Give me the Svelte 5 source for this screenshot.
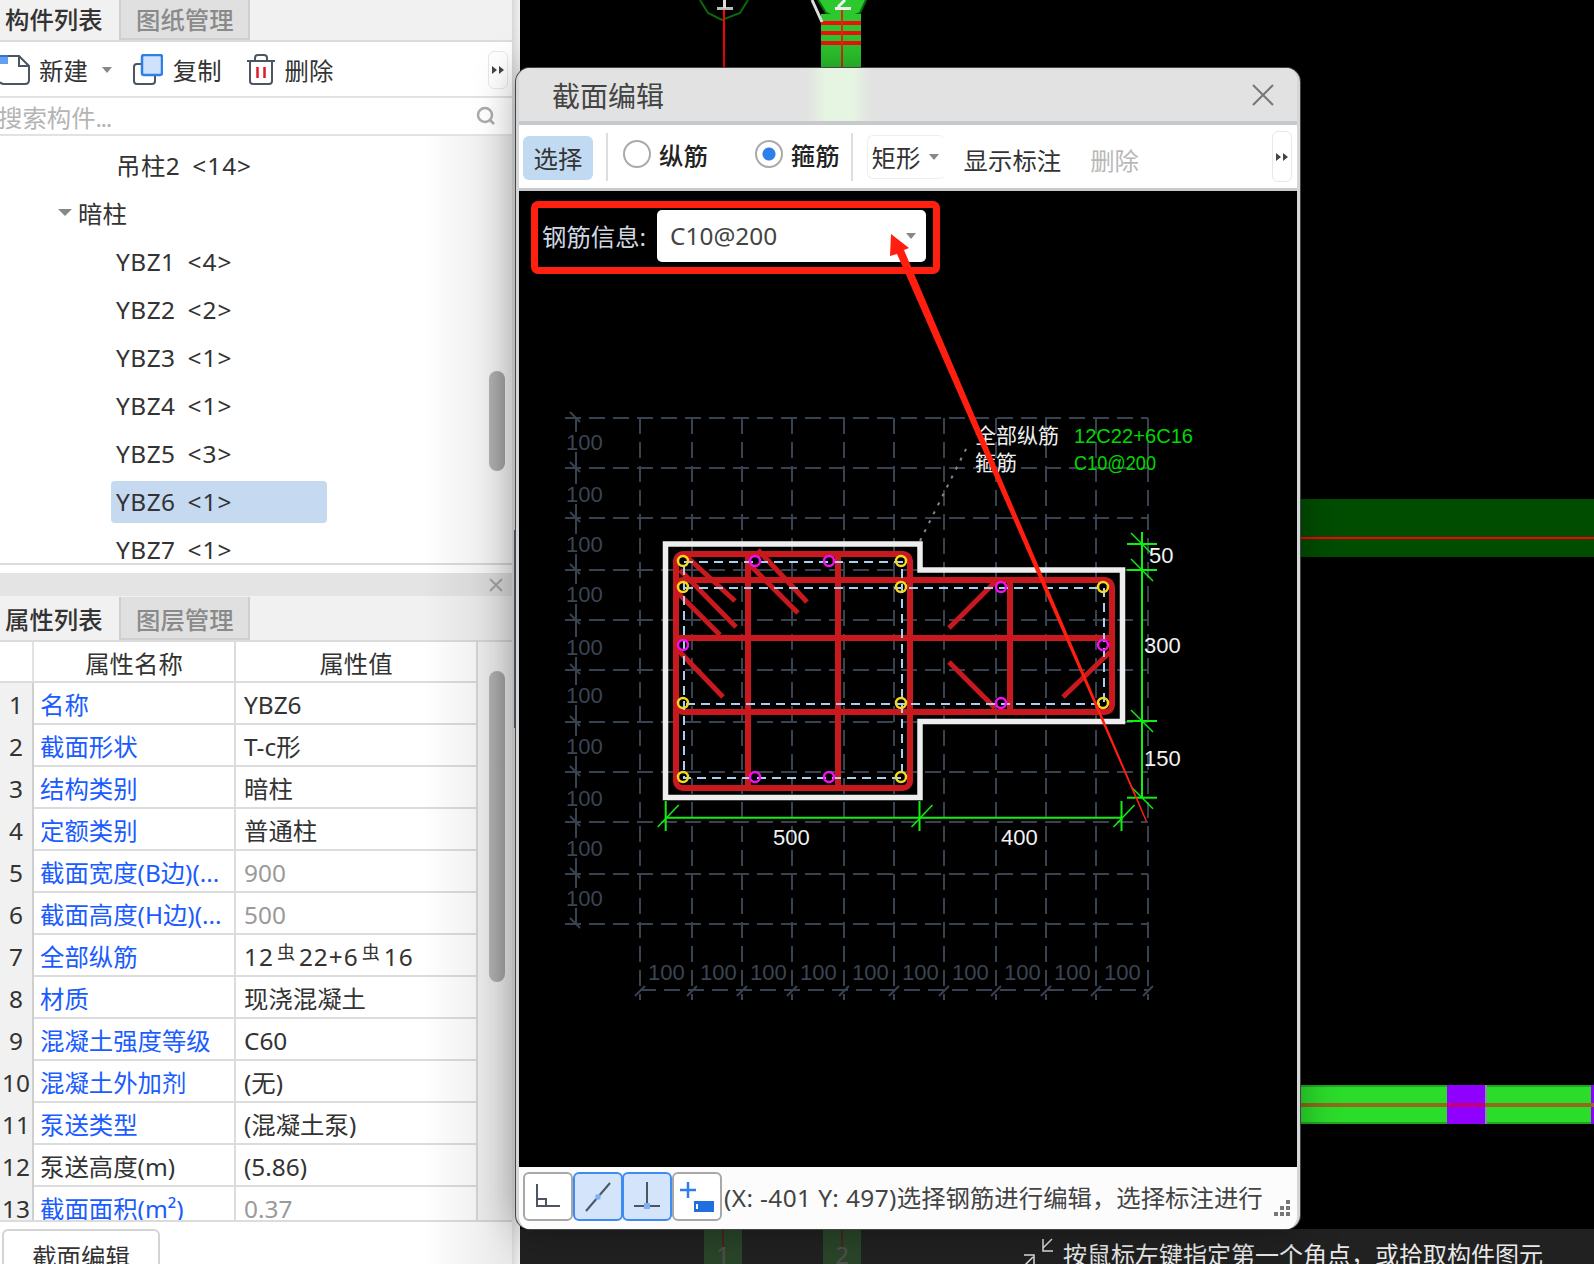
<script>
  const treeRows = [
    { name: "YBZ1", count: 4 },
    { name: "YBZ2", count: 2 },
    { name: "YBZ3", count: 1 },
    { name: "YBZ4", count: 1 },
    { name: "YBZ5", count: 3 },
    { name: "YBZ6", count: 1, selected: true },
    { name: "YBZ7", count: 1 },
  ];

  const props = [
    { name: "名称", value: "YBZ6", link: true },
    { name: "截面形状", value: "T-c形", link: true },
    { name: "结构类别", value: "暗柱", link: true },
    { name: "定额类别", value: "普通柱", link: true },
    { name: "截面宽度(B边)(...", value: "900", link: true, muted: true },
    { name: "截面高度(H边)(...", value: "500", link: true, muted: true },
    { name: "全部纵筋", rebar: true, link: true },
    { name: "材质", value: "现浇混凝土", link: true },
    { name: "混凝土强度等级", value: "C60", link: true },
    { name: "混凝土外加剂", value: "(无)", link: true },
    { name: "泵送类型", value: "(混凝土泵)", link: true },
    { name: "泵送高度(m)", value: "(5.86)" },
    { name: "截面面积(m²)", value: "0.37", link: true, muted: true },
  ];

  // drawing coordinates are page pixels, the svg viewBox lines them up
  const gridX = [640, 692, 742, 792, 844, 894, 944, 996, 1046, 1096, 1148];
  const gridY = [418, 468, 518, 570, 620, 670, 722, 772, 822, 874, 924];
  const sideLabels = [442, 494, 544, 594, 647, 695, 746, 798, 848, 898];
  const hooks = [
    [685, 555, 735, 601], [680, 570, 736, 627], [678, 593, 720, 635], [676, 648, 723, 697],
    [750, 565, 798, 613], [758, 550, 807, 602], [997, 580, 949, 628], [949, 662, 995, 708],
    [1110, 652, 1063, 697],
  ];
  const yellow = [[683, 561], [901, 561], [683, 587], [901, 587], [683, 703], [901, 703], [683, 777], [901, 777], [1103, 587], [1103, 703]];
  const magenta = [[755, 561], [829, 561], [683, 645], [755, 777], [829, 777], [1001, 587], [1001, 703], [1103, 645]];
  const dimTicks = [665.7, 919.5, 1121.5];
  const sideTicks = [544, 570, 721, 797.7];
</script>

<div class="app">
  <aside class="left">
    <div class="tabs">
      <div class="tab active">构件列表</div>
      <div class="tab">图纸管理</div>
    </div>
    <div class="tools">
      <svg class="ico-new" width="30" height="32" viewBox="0 0 30 32">
        <path d="M0 2H19L29 12V26Q29 30 25 30H4Q1 30 0 28" fill="#fff" stroke="#4b5563" stroke-width="2" />
        <path d="M19 2V12H29" fill="none" stroke="#4b5563" stroke-width="2" />
        <rect x="0" y="1" width="8" height="9" fill="#2f7fe8" opacity=".75" />
      </svg>
      <span>新建</span>
      <i class="tri"></i>
      <svg class="ico-copy" width="30" height="32" viewBox="0 0 30 32">
        <rect x="1" y="10" width="21" height="20" rx="3" fill="#fff" stroke="#4b5563" stroke-width="2" />
        <rect x="9" y="1" width="20" height="20" rx="2" fill="#cfe2fb" stroke="#2f7fe8" stroke-width="2.5" />
      </svg>
      <span class="lbl">复制</span>
      <svg class="ico-del" width="28" height="32" viewBox="0 0 28 32">
        <path d="M0 7H28M8 7V4Q8 1 11 1H17Q20 1 20 4V7" fill="none" stroke="#4b5563" stroke-width="2" />
        <path d="M3 7V27Q3 30 6 30H22Q25 30 25 27V7" fill="none" stroke="#4b5563" stroke-width="2" />
        <path d="M10.500 13V24M17.500 13V24" stroke="#e01b24" stroke-width="2.500" />
      </svg>
      <span class="lbl">删除</span>
      <div class="handle">
        <svg width="12" height="10" viewBox="0 0 12 10"><path d="M0 1L5 5L0 9ZM7 1L12 5L7 9Z" fill="#444" /></svg>
      </div>
    </div>
    <div class="search">
      <span>搜索构件<span class="dots">...</span></span>
      <svg width="20" height="20" viewBox="0 0 20 20">
        <circle cx="9" cy="9" r="7" fill="none" stroke="#aaa" stroke-width="2.500" />
        <path d="M14 14L18 18" stroke="#aaa" stroke-width="2.500" />
      </svg>
    </div>
    <div class="tree">
      <div class="row leaf"><span class="item">吊柱2<b>&lt;14&gt;</b></span></div>
      <div class="row group"><i class="tri"></i>暗柱</div>
      {#each treeRows as r}
        <div class="row leaf">
          <span class="item" class:selected={r.selected}>{r.name}<b>&lt;{r.count}&gt;</b></span>
        </div>
      {/each}
      <div class="thumb tree-thumb"></div>
    </div>
    <div class="gap"></div>
    <div class="closebar">
      <svg width="14" height="14" viewBox="0 0 14 14"><path d="M1 1L13 13M13 1L1 13" stroke="#aaa" stroke-width="2" /></svg>
    </div>
    <div class="tabs second">
      <div class="tab active">属性列表</div>
      <div class="tab">图层管理</div>
    </div>
    <div class="props">
      <div class="table">
        <div class="tr head">
          <div class="idx"></div>
          <div class="cell">属性名称</div>
          <div class="cell">属性值</div>
        </div>
        {#each props as p, i}
          <div class="tr">
            <div class="idx">{i + 1}</div>
            <div class="cell name" class:link={p.link}>{p.name}</div>
            <div class="cell val" class:muted={p.muted} class:spaced={p.rebar}>
              {#if p.rebar}
                12<span class="bar-sign">虫</span>22+6<span class="bar-sign">虫</span>16
              {:else}
                {p.value}
              {/if}
            </div>
          </div>
        {/each}
      </div>
      <div class="gutter"><div class="thumb props-thumb"></div></div>
    </div>
    <div class="bottom-tabs">
      <div class="bottom-tab">截面编辑</div>
    </div>
  </aside>

  <div class="splitter"><div class="splitter-dark"></div></div>

  <main class="canvas">
    <svg class="scene" width="1074" height="1264" viewBox="520 0 1074 1264">
      <!-- axis 1 -->
      <path d="M700 0L708 13L722 20L740 13L748 0" fill="none" stroke="#0a6a0a" stroke-width="2" />
      <rect x="717" y="7" width="16" height="3" fill="#bbb" />
      <rect x="723" y="0" width="3" height="8" fill="#ddd" />
      <rect x="723" y="10" width="2" height="58" fill="#f00" />
      <!-- axis 2 -->
      <path d="M818 0L826 13L842 20L860 13L866 0" fill="#2dc82d" stroke="#0a6a0a" stroke-width="2" />
      <rect x="821" y="14" width="40" height="54" fill="#2dc82d" />
      <rect x="821" y="21" width="40" height="4" fill="#f01010" />
      <rect x="821" y="31" width="40" height="4" fill="#f01010" />
      <rect x="821" y="41" width="40" height="4" fill="#f01010" />
      <rect x="841" y="8" width="2" height="60" fill="#d03010" />
      <path d="M812 0L822 22" stroke="#ddd" stroke-width="3" />
      <rect x="835" y="7" width="16" height="3" fill="#eee" />
      <path d="M838 7L845 0" stroke="#eee" stroke-width="3" />
      <!-- beams on the right -->
      <rect x="1300" y="499" width="294" height="58" fill="#004d00" />
      <rect x="1300" y="537" width="294" height="2" fill="#f00" />
      <rect x="1300" y="1085" width="294" height="39" fill="#2bdc2b" />
      <rect x="1300" y="1085" width="294" height="2" fill="#22a522" />
      <rect x="1300" y="1122" width="294" height="2" fill="#22a522" />
      <rect x="1447" y="1085" width="38" height="39" fill="#8f00ff" />
      <rect x="1485" y="1085" width="2" height="39" fill="#7a9a9a" />
      <rect x="1591" y="1085" width="3" height="39" fill="#8f00ff" />
      <rect x="1300" y="1103" width="294" height="4" fill="#8f6b1c" />
      <rect x="1447" y="1103" width="38" height="4" fill="#c0007f" />
      <!-- axes running under the hint strip -->
      <path d="M704 1229H742V1264H704ZM823 1229H861V1264H823Z" fill="#2dc82d" />
      <path d="M723 1229V1250M842 1229V1250" stroke="#f00" stroke-width="2" />
      <text x="723" y="1264" class="axis-no">1</text>
      <text x="842" y="1264" class="axis-no">2</text>
    </svg>

    <div class="hint">
      <svg width="32" height="30" viewBox="0 0 32 30">
        <path d="M30 1L21 10M21 1V13H31M1 29L11 19M12 30V17H2" fill="none" stroke="#ddd" stroke-width="1.500" />
      </svg>
      <span>按鼠标左键指定第一个角点，或拾取构件图元</span>
    </div>

    <section class="modal">
      <header class="title">
        <div class="glow"></div>
        <span>截面编辑</span>
        <svg width="24" height="24" viewBox="0 0 24 24"><path d="M2 2L22 22M22 2L2 22" stroke="#777" stroke-width="2" /></svg>
      </header>

      <div class="mtools">
        <div class="pick">选择</div>
        <div class="sep first"></div>
        <label class="radio one"><i></i>纵筋</label>
        <label class="radio on two"><i></i>箍筋</label>
        <div class="sep"></div>
        <div class="shape">矩形<i class="tri"></i></div>
        <div class="tlink">显示标注</div>
        <div class="tlink off">删除</div>
        <div class="handle small">
          <svg width="12" height="10" viewBox="0 0 12 10"><path d="M0 1L5 5L0 9ZM7 1L12 5L7 9Z" fill="#444" /></svg>
        </div>
      </div>

      <div class="mbody">
        <svg class="drawing" width="778" height="976" viewBox="519 191 778 976">
          <g class="grid">
            {#each gridX as x}
              <line x1={x} y1="418" x2={x} y2="1000" />
            {/each}
            {#each gridY as y}
              <line x1="565" y1={y} x2="1148" y2={y} />
            {/each}
            <line x1="640" y1="990" x2="1148" y2="990" />
          </g>
          {#each sideLabels as y, i}
            <line x1="576" y1={gridY[i]} x2="576" y2={y - 10} class="solid" />
            <line x1="576" y1={y + 10} x2="576" y2={gridY[i + 1]} class="solid" />
          {/each}
          {#each gridY as y}
            <line x1="570" y1={y - 6} x2="580" y2={y + 4} class="solid" />
          {/each}
          {#each gridX as x}
            <line x1={x - 5} y1="996" x2={x + 5} y2="986" class="solid" />
          {/each}
          {#each sideLabels as y}
            <text x="566" y={y + 8} class="gridtxt">100</text>
          {/each}
          {#each gridX.slice(0, 10) as x}
            <text x={x + 8} y="980" class="gridtxt">100</text>
          {/each}

          <path d="M920 541L969 443" stroke="#888" stroke-width="2" stroke-dasharray="3 7" fill="none" />
          <text x="975" y="443" class="note">全部纵筋</text>
          <text x="975" y="470" class="note">箍筋</text>
          <text x="1074" y="443" class="note green" textLength="119" lengthAdjust="spacingAndGlyphs">12C22+6C16</text>
          <text x="1074" y="470" class="note green" textLength="82" lengthAdjust="spacingAndGlyphs">C10@200</text>

          <!-- section outline -->
          <path d="M665.500 544H920V570H1122.500V721.500H920V797.500H665.500Z" fill="none" stroke="#eee" stroke-width="5.500" />

          <!-- stirrups -->
          <g class="rebar">
            <rect x="676" y="554" width="234" height="234" rx="7" />
            <rect x="676" y="580" width="436" height="132" rx="7" />
            <path d="M676 638H1112M748 554V788M838 556V786M1010 580V712" />
          </g>
          {#each hooks as h}
            <line x1={h[0]} y1={h[1]} x2={h[2]} y2={h[3]} class="hook" />
          {/each}

          <g class="ties">
            <path d="M684 562H902V778H684ZM684 588H1104V704H684" />
          </g>
          {#each yellow as c}
            <circle cx={c[0]} cy={c[1]} r="5" class="ring yellow" />
          {/each}
          {#each magenta as c}
            <circle cx={c[0]} cy={c[1]} r="5" class="ring magenta" />
          {/each}

          <!-- dimensions -->
          <g class="dim">
            <line x1="665.700" y1="817.700" x2="1121.500" y2="817.700" />
            {#each dimTicks as x}
              <line x1={x} y1="801" x2={x} y2="831" />
              <line x1={x + 13} y1="805" x2={x - 8} y2="827" class="thin" />
            {/each}
            <line x1="1142" y1="532" x2="1142" y2="797.700" />
            {#each sideTicks as y}
              <line x1="1127" y1={y} x2="1157" y2={y} />
              <line x1="1131" y1={y - 11} x2="1153" y2={y + 11} class="thin" />
            {/each}
          </g>
          <text x="773" y="845" class="dimtxt">500</text>
          <text x="1001" y="845" class="dimtxt">400</text>
          <text x="1149" y="563" class="dimtxt">50</text>
          <text x="1144" y="653" class="dimtxt">300</text>
          <text x="1144" y="766" class="dimtxt">150</text>
        </svg>

        <div class="info">
          <span class="info-label">钢筋信息:</span>
          <div class="combo">C10@200<i class="tri"></i></div>
        </div>

        <!-- red arrow painted over the screenshot -->
        <svg class="annot" width="778" height="976" viewBox="519 191 778 976">
          <path d="M891 234L909 248L904 250L1147 821L1145.500 821L897 254L890 256Z" fill="#ff1e0f" />
        </svg>
      </div>

      <footer class="status">
        <div class="sbtn">
          <svg width="30" height="30" viewBox="0 0 30 30"><path d="M4 2V24H27M4 17H13V24" fill="none" stroke="#4b5563" stroke-width="2" /></svg>
        </div>
        <div class="sbtn on">
          <svg width="30" height="32" viewBox="0 0 30 32"><path d="M3 30L27 2" stroke="#4b5563" stroke-width="2" /><rect x="12.500" y="13.500" width="5" height="5" fill="#7fb0f0" /></svg>
        </div>
        <div class="sbtn on">
          <svg width="30" height="32" viewBox="0 0 30 32"><path d="M15 1V25M2 25H28" stroke="#4b5563" stroke-width="2" /><rect x="12" y="22" width="6" height="6" fill="#7fb0f0" /></svg>
        </div>
        <div class="sbtn">
          <svg width="34" height="32" viewBox="0 0 34 32"><path d="M8 1V17M0 9H16" stroke="#2f7fe8" stroke-width="2.500" /><rect x="14" y="20" width="20" height="11" fill="#1f6fe0" /><rect x="16" y="23" width="2" height="5" fill="#fff" /></svg>
        </div>
        <div class="stext"><span class="coords">(X: -401 Y: 497)</span>选择钢筋进行编辑，选择标注进行</div>
        <svg class="grip" width="18" height="18" viewBox="0 0 18 18">
          <path d="M13 1h4v4h-4zM7 7h4v4H7zM13 7h4v4h-4zM1 13h4v4H1zM7 13h4v4H7zM13 13h4v4h-4z" fill="#777" />
        </svg>
      </footer>
    </section>
  </main>
</div>

<style>
  :global(body) {
    background: #000;
  }

  .app {
    display: flex;
    width: 1594px;
    height: 1264px;
    overflow: hidden;
    font-family: "Noto Sans", "Noto Sans CJK SC", sans-serif;
    font-size: 24.4px;
    color: #333;
  }

  .left {
    position: relative;
    flex: 0 0 512px;
    display: flex;
    flex-direction: column;
    background: #fff;
  }

  .left::after {
    content: "";
    position: absolute;
    top: 136px;
    right: 0;
    bottom: 0;
    width: 90px;
    background: linear-gradient(to right, rgba(0, 0, 0, 0), rgba(0, 0, 0, 0.09));
    pointer-events: none;
  }

  .splitter {
    position: relative;
    flex: 0 0 8px;
    background: linear-gradient(to right, #d8d8d8, #f0f0f0);
  }

  .splitter-dark {
    position: absolute;
    left: 2px;
    top: 530px;
    width: 4px;
    height: 198px;
    background: #596270;
  }

  .tabs {
    display: flex;
    height: 42px;
    background: #f1f1f1;
    border-bottom: 2px solid #dcdcdc;
    box-sizing: border-box;
  }

  .tabs.second {
    height: 46px;
    padding-top: 1px;
  }

  .tabs.second .tab {
    line-height: 45px;
  }

  .tab {
    width: 131px;
    padding-left: 15px;
    box-sizing: border-box;
    line-height: 40px;
    background: #e0e0e0;
    color: #8a8a8a;
    font-weight: 500;
    border-left: 2px solid #cfcfcf;
    border-right: 2px solid #cfcfcf;
    border-bottom: 2px solid #cfcfcf;
  }

  .tab.active {
    width: 119px;
    padding-left: 5px;
    background: #f1f1f1;
    color: #333;
    border: 0;
  }

  .tools {
    display: flex;
    align-items: center;
    height: 56px;
    padding-top: 1px;
    box-sizing: border-box;
    border-bottom: 2px solid #e2e2e2;
  }

  .ico-new {
    margin-right: 9px;
  }

  .tri {
    display: inline-block;
    width: 0;
    height: 0;
    border-left: 5px solid transparent;
    border-right: 5px solid transparent;
    border-top: 6px solid #888;
  }

  .tools .tri {
    margin-left: 14px;
  }

  .ico-copy {
    margin-left: 21px;
  }

  .ico-del {
    margin-left: 25px;
  }

  .lbl {
    margin-left: 10px;
  }

  .handle {
    display: flex;
    align-items: center;
    justify-content: center;
    width: 20px;
    height: 38px;
    margin-left: auto;
    margin-right: 4px;
    border: 1px solid #e8e8e8;
    border-radius: 6px;
    box-sizing: border-box;
  }

  .handle.small {
    height: 51px;
    margin-right: 5px;
  }

  .search {
    display: flex;
    align-items: center;
    justify-content: space-between;
    height: 38px;
    padding-right: 16px;
    box-sizing: border-box;
    border-bottom: 2px solid #e2e2e2;
    color: #b4b4b4;
  }

  .search > span {
    margin-left: -2px;
  }

  .dots {
    letter-spacing: -1.5px;
  }

  .tree {
    position: relative;
    height: 429px;
    padding-top: 6px;
    box-sizing: border-box;
    border-bottom: 2px solid #dcdcdc;
    overflow: hidden;
  }

  .row {
    display: flex;
    align-items: center;
    height: 48px;
  }

  .row.leaf {
    padding-left: 111px;
  }

  .row.group {
    padding-left: 58px;
    padding-bottom: 4px;
    box-sizing: border-box;
  }

  .row.group .tri {
    margin-right: 6px;
    border-left-width: 7px;
    border-right-width: 7px;
    border-top-width: 7px;
  }

  .item {
    height: 42px;
    width: 216px;
    padding-left: 5px;
    box-sizing: border-box;
    line-height: 41px;
    border-radius: 4px;
    white-space: nowrap;
    letter-spacing: 0.5px;
  }

  .item.selected {
    background: #c5d9f1;
  }

  .item b {
    margin-left: 12px;
    font-weight: 400;
    letter-spacing: 1px;
  }

  .thumb {
    position: absolute;
    width: 16px;
    border-radius: 8px;
    background: linear-gradient(to right, #bdbdbd, #ababab);
  }

  .tree-thumb {
    left: 489px;
    top: 235px;
    height: 100px;
  }

  .gap {
    height: 8px;
  }

  .closebar {
    display: flex;
    align-items: center;
    justify-content: flex-end;
    height: 23px;
    padding-right: 9px;
    background: #e4e4e4;
  }

  .props {
    position: relative;
    display: flex;
    height: 580px;
    overflow: hidden;
    border-bottom: 2px solid #dcdcdc;
    box-sizing: border-box;
  }

  .table {
    flex: 0 0 478px;
  }

  .tr {
    display: grid;
    grid-template-columns: 34px 202px 242px;
    height: 42px;
    box-sizing: border-box;
    border-bottom: 2px solid #dcdcdc;
    line-height: 44px;
  }

  .tr.head {
    height: 41px;
    text-align: center;
  }

  .idx {
    background: #f1f1f1;
    border-right: 2px solid #cfcfcf;
    box-sizing: border-box;
    text-align: center;
    white-space: nowrap;
  }

  .tr.head .idx {
    background: #fff;
    border-right-color: #e2e2e2;
  }

  .cell {
    border-right: 2px solid #dcdcdc;
    box-sizing: border-box;
    white-space: nowrap;
    overflow: hidden;
  }

  .cell.name {
    padding-left: 6px;
  }

  .cell.val {
    padding-left: 8px;
  }

  .cell.spaced {
    letter-spacing: 1px;
  }

  .link {
    color: #1a5cff;
  }

  .muted {
    color: #9a9a9a;
  }

  .bar-sign {
    display: inline-block;
    margin: 0 3px;
    font-size: 18px;
    line-height: 18px;
    vertical-align: 7px;
  }

  .gutter {
    flex: 1;
    background: #f6f6f6;
  }

  .props-thumb {
    left: 489px;
    top: 29px;
    height: 311px;
  }

  .bottom-tabs {
    flex: 1;
    padding: 7px 0 0 2px;
    overflow: hidden;
  }

  .bottom-tab {
    width: 158px;
    height: 44px;
    padding-top: 6px;
    box-sizing: border-box;
    text-align: center;
    background: #fff;
    border: 2px solid #d4d4d4;
    border-radius: 6px 6px 0 0;
    line-height: 40px;
  }

  .canvas {
    position: relative;
    flex: 1;
    background: #000;
  }

  .scene {
    display: block;
  }

  .axis-no {
    font-size: 24px;
    text-anchor: middle;
    fill: #fff;
  }

  .hint {
    position: absolute;
    left: 0;
    right: 0;
    top: 1229px;
    height: 35px;
    padding-left: 502px;
    display: flex;
    align-items: flex-start;
    gap: 9px;
    background: rgba(40, 40, 40, 0.82);
    color: #e8e8e8;
    font-size: 24px;
    line-height: 52px;
    white-space: nowrap;
    overflow: hidden;
  }

  .hint svg {
    flex: none;
    margin-top: 9px;
  }

  .modal {
    position: absolute;
    left: -4px;
    top: 68px;
    display: flex;
    flex-direction: column;
    width: 784px;
    height: 1161px;
    box-sizing: border-box;
    border: 3px solid #d4d7da;
    border-top: 0;
    border-bottom: 0;
    border-radius: 14px;
    background: #fff;
    box-shadow: 0 0 0 1px #444, 0 0 40px rgba(0, 0, 0, 0.35);
    overflow: hidden;
  }

  .title {
    position: relative;
    display: flex;
    align-items: center;
    justify-content: space-between;
    height: 57px;
    padding: 0 22px 0 29px;
    box-sizing: border-box;
    background: #e2e2e2;
    border-bottom: 4px solid #c6cacd;
    font-size: 28px;
    color: #444;
  }

  .title span,
  .title svg {
    position: relative;
  }

  .title span {
    margin-left: 4px;
    margin-top: 1px;
  }

  .glow {
    position: absolute;
    left: 288px;
    top: 0;
    bottom: 0;
    width: 64px;
    background: linear-gradient(to right, rgba(230, 245, 226, 0), #e6f5e2 30%, #e6f5e2 70%, rgba(230, 245, 226, 0));
  }

  .mtools {
    display: flex;
    align-items: center;
    height: 66px;
    padding-left: 4px;
    box-sizing: border-box;
    background: #fff;
    border-bottom: 3px solid #c6cacd;
  }

  .pick {
    width: 70px;
    height: 44px;
    margin-top: 2px;
    line-height: 46px;
    text-align: center;
    border-radius: 6px;
    background: #c2d9f2;
  }

  .sep {
    width: 2px;
    height: 48px;
    margin-left: 11px;
    background: #dedede;
  }

  .sep.first {
    margin-left: 13px;
  }

  .radio {
    display: flex;
    align-items: center;
    margin-top: -5px;
    color: #222;
    font-weight: 500;
  }

  .radio.one {
    margin-left: 15px;
  }

  .radio.two {
    margin-left: 47px;
  }

  .radio i {
    width: 28px;
    height: 28px;
    margin-right: 8px;
    box-sizing: border-box;
    border: 2px solid #aaa;
    border-radius: 50%;
    background: #fff;
  }

  .radio.on i {
    background: radial-gradient(circle, #2f7fe8 0 6px, #fff 7px);
  }

  .shape {
    display: flex;
    align-items: center;
    width: 78px;
    height: 44px;
    margin-left: 14px;
    padding-left: 4px;
    box-sizing: border-box;
    border: 1px solid #eee;
    border-right: 0;
    border-radius: 6px;
  }

  .shape .tri {
    margin-left: 9px;
  }

  .tlink {
    margin-left: 19px;
    margin-top: 5px;
  }

  .tlink.off {
    margin-left: 29px;
    color: #b8b8b8;
  }

  .mbody {
    position: relative;
    flex: 1;
    background: #000;
  }

  .drawing,
  .annot {
    position: absolute;
    left: 0;
    top: 0;
  }

  .annot {
    pointer-events: none;
  }

  .grid line {
    stroke: #384250;
    stroke-width: 2;
    stroke-dasharray: 16 8;
  }

  .solid {
    stroke: #384250;
    stroke-width: 2;
  }

  .gridtxt {
    font-family: "Liberation Sans", sans-serif;
    font-size: 22px;
    fill: #3b4552;
  }

  .note {
    font-family: "Liberation Sans", "Noto Sans CJK SC", sans-serif;
    font-size: 21px;
    fill: #eee;
  }

  .note.green {
    fill: #00d800;
  }

  .rebar {
    fill: none;
    stroke: #c8191f;
    stroke-width: 6;
  }

  .hook {
    stroke: #c8191f;
    stroke-width: 5;
  }

  .ties {
    fill: none;
    stroke: #a8d0f0;
    stroke-width: 2;
    stroke-dasharray: 9 6;
  }

  .ring {
    fill: none;
    stroke-width: 2.5;
  }

  .ring.yellow {
    stroke: #f5d820;
  }

  .ring.magenta {
    stroke: #f010f0;
  }

  .dim line {
    stroke: #10f010;
    stroke-width: 2;
  }

  .dim line.thin {
    stroke-width: 1.5;
  }

  .dimtxt {
    font-family: "Liberation Sans", sans-serif;
    font-size: 22px;
    fill: #f2f2f2;
  }

  .info {
    position: absolute;
    left: 12px;
    top: 10px;
    display: flex;
    align-items: center;
    width: 409px;
    height: 73px;
    padding-bottom: 4px;
    box-sizing: border-box;
    border: 7px solid #ff2010;
    border-radius: 7px;
  }

  .info-label {
    margin-left: 4px;
    color: #cfd8e0;
  }

  .combo {
    position: relative;
    display: flex;
    align-items: center;
    justify-content: space-between;
    width: 269px;
    height: 52px;
    margin-left: 11px;
    padding: 0 10px 0 13px;
    box-sizing: border-box;
    background: #fff;
    border-radius: 5px;
    color: #444;
  }

  .status {
    display: flex;
    align-items: center;
    height: 62px;
    padding: 0 0 3px 4px;
    box-sizing: border-box;
    background: #fcfcfc;
  }

  .sbtn {
    display: flex;
    align-items: center;
    justify-content: center;
    width: 50px;
    height: 49px;
    margin-right: -0.5px;
    box-sizing: border-box;
    background: #fff;
    border: 2px solid #a8a8a8;
    border-radius: 6px;
  }

  .sbtn.on {
    position: relative;
    background: #d3e4fb;
    border-color: #3f8cf0;
  }

  .stext {
    margin-left: 3px;
    color: #444;
    white-space: nowrap;
  }

  .coords {
    letter-spacing: 0.4px;
  }

  .grip {
    margin-left: auto;
    margin-right: 6px;
    margin-top: 22px;
  }
</style>
